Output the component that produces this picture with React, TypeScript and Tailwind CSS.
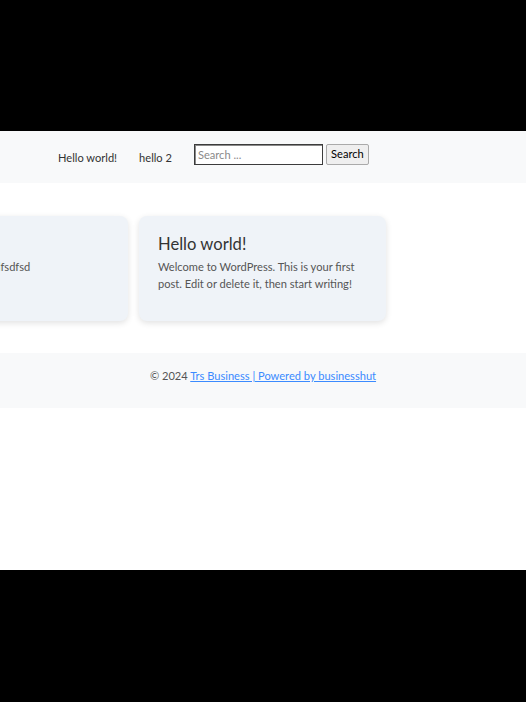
import React from 'react';

const font = { fontFamily: 'Lato, "Noto Sans", sans-serif' };

interface Post {
  id: number;
  title: string;
  excerpt: string;
}

const posts: Post[] = [
  { id: 2, title: 'hello 2', excerpt: 'sdfsdfsdfsdfsdfsdfsdfsdfsd' },
  { id: 1, title: 'Hello world!', excerpt: 'Welcome to WordPress. This is your first post. Edit or delete it, then start writing!' },
];

function PostCard({ post }: { post: Post }) {
  return (
    <div className="w-[247px] h-[105px] shrink-0 rounded-[8px] bg-[#eff3f8] shadow-[0_2px_6px_rgba(0,0,0,0.12)] px-[19px] pt-[18px]">
      <h2 className="text-[16.6px] leading-[20px] text-[#333]">{post.title}</h2>
      <p className="mt-[4px] text-[11.1px] leading-[17px] text-[#555]">{post.excerpt}</p>
    </div>
  );
}

export default function App() {
  return (
    <div className="bg-black h-[702px] pt-[131px]" style={font}>
      <div className="bg-white h-[439px] overflow-hidden">
        {/* Header */}
        <header className="h-[52px] bg-[#f8f9fa] flex items-center pl-[58px]">
          <nav className="flex items-center gap-[22px] text-[11.1px] text-[#333] mt-[2px]">
            <a className="cursor-pointer">Hello world!</a>
            <a className="cursor-pointer">hello 2</a>
          </nav>
          <form className="flex items-center gap-[3px] ml-[22px] -mt-[5px]">
            <input
              type="text"
              placeholder="Search ..."
              className="w-[129px] h-[21px] bg-white border border-[#3c3c3c] shadow-[inset_1px_1px_0_#8a8a8a] px-[3px] text-[11.1px] text-[#333] placeholder:text-[#8a8a8a] outline-none"
            />
            <button
              type="button"
              className="w-[43px] h-[21px] bg-[#efefef] border border-[#aaa] rounded-[2px] text-[11.1px] text-black"
            >
              Search
            </button>
          </form>
        </header>

        {/* Posts */}
        <main className="h-[170px] pt-[33px] overflow-hidden">
          <div className="flex gap-[11px] -ml-[119px]">
            {posts.map((post) => (
              <PostCard key={post.id} post={post} />
            ))}
          </div>
        </main>

        {/* Footer */}
        <footer className="h-[55px] bg-[#f8f9fa] flex justify-center pt-[15px] text-[11.1px] text-[#555]">
          <p>
            © 2024{' '}
            <a className="text-[#3b8bff] underline cursor-pointer">Trs Business | Powered by businesshut</a>
          </p>
        </footer>
      </div>
    </div>
  );
}
